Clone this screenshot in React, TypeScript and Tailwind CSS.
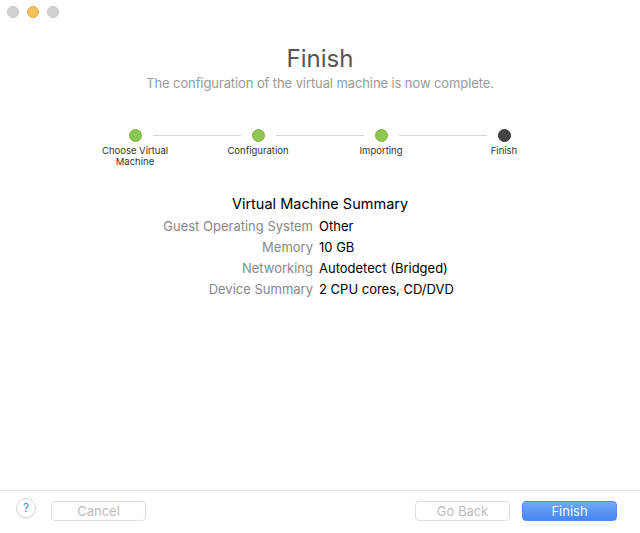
import React from 'react'

const steps = [
  { label: 'Choose Virtual\nMachine', done: true },
  { label: 'Configuration', done: true },
  { label: 'Importing', done: true },
  { label: 'Finish', done: false },
]

const summary = [
  ['Guest Operating System', 'Other'],
  ['Memory', '10 GB'],
  ['Networking', 'Autodetect (Bridged)'],
  ['Device Summary', '2 CPU cores, CD/DVD'],
]

export default function App() {
  return (
    <div
      className="w-[640px] h-[533px] bg-white flex flex-col overflow-hidden"
      style={{ fontFamily: 'Inter, "Liberation Sans", sans-serif' }}
    >
      {/* traffic lights */}
      <div className="flex items-center gap-[8px] pl-[7px] pt-[4px] h-[20px]">
        <span className="w-[12px] h-[12px] rounded-full bg-[#d0d0d0] border border-[#c4c4c4]" />
        <span className="w-[12px] h-[12px] rounded-full bg-[#f1c15d] border border-[#e2b050]" />
        <span className="w-[12px] h-[12px] rounded-full bg-[#d0d0d0] border border-[#c4c4c4]" />
      </div>

      <div className="flex-1 flex flex-col items-center">
        <h1 className="mt-[24px] text-[24px] leading-[30px] text-[#555]">Finish</h1>
        <p className="mt-[1px] text-[13px] leading-[16px] text-[#9a9a9a] tracking-[-0.1px]">
          The configuration of the virtual machine is now complete.
        </p>

        {/* stepper */}
        <div className="mt-[38px] grid grid-cols-4 w-[492px] ml-[-1px]">
          {steps.map((s, i) => (
            <div key={i} className="flex flex-col items-center">
              <div className="flex items-center w-full h-[13px]">
                <div className={`flex-1 h-px ${i === 0 ? '' : 'bg-[#d6d6d6]'}`} />
                <span
                  className={`mx-[11px] w-[13px] h-[13px] rounded-full ${
                    s.done ? 'bg-[#8fc64f] border border-[#7fb140]' : 'bg-[#444] border border-[#333]'
                  }`}
                />
                <div className={`flex-1 h-px ${i === steps.length - 1 ? '' : 'bg-[#d6d6d6]'}`} />
              </div>
              <div className="mt-[3px] text-[9.5px] leading-[11px] text-[#333] text-center whitespace-pre-line">
                {s.label}
              </div>
            </div>
          ))}
        </div>

        {/* summary */}
        <div className="mt-[28px] text-[14.5px] leading-[18px] text-black">Virtual Machine Summary</div>
        <div className="mt-[3px] w-full grid grid-cols-[313px_1fr] gap-x-[6px] text-[13px] leading-[21px]">
          {summary.map(([k, v]) => (
            <React.Fragment key={k}>
              <div className="text-right text-[#888]">{k}</div>
              <div className="text-black">{v}</div>
            </React.Fragment>
          ))}
        </div>
      </div>

      {/* footer */}
      <div className="h-[43px] border-t border-[#e3e3e3] flex items-start pt-[7px] pl-[16px] pr-[23px]">
        <button className="w-[20px] h-[20px] rounded-full border border-[#d8d8d8] bg-white text-[#4a8af0] text-[12px] leading-none flex items-center justify-center shadow-[0_1px_0_rgba(0,0,0,0.05)]">
          ?
        </button>
        <button className="ml-[15px] mt-[3px] w-[95px] h-[20px] rounded-[4px] border border-[#e0e0e0] bg-white text-[13px] text-[#bcbcbc] leading-none">
          Cancel
        </button>
        <div className="flex-1" />
        <button className="mt-[3px] w-[95px] h-[20px] rounded-[4px] border border-[#e0e0e0] bg-white text-[13px] text-[#bcbcbc] leading-none">
          Go Back
        </button>
        <button className="ml-[12px] mt-[3px] w-[95px] h-[20px] rounded-[4px] border border-[#4f8cef] bg-gradient-to-b from-[#73a8f8] to-[#4785f1] text-[13px] text-[#eef4ff] leading-none">
          Finish
        </button>
      </div>
    </div>
  )
}
